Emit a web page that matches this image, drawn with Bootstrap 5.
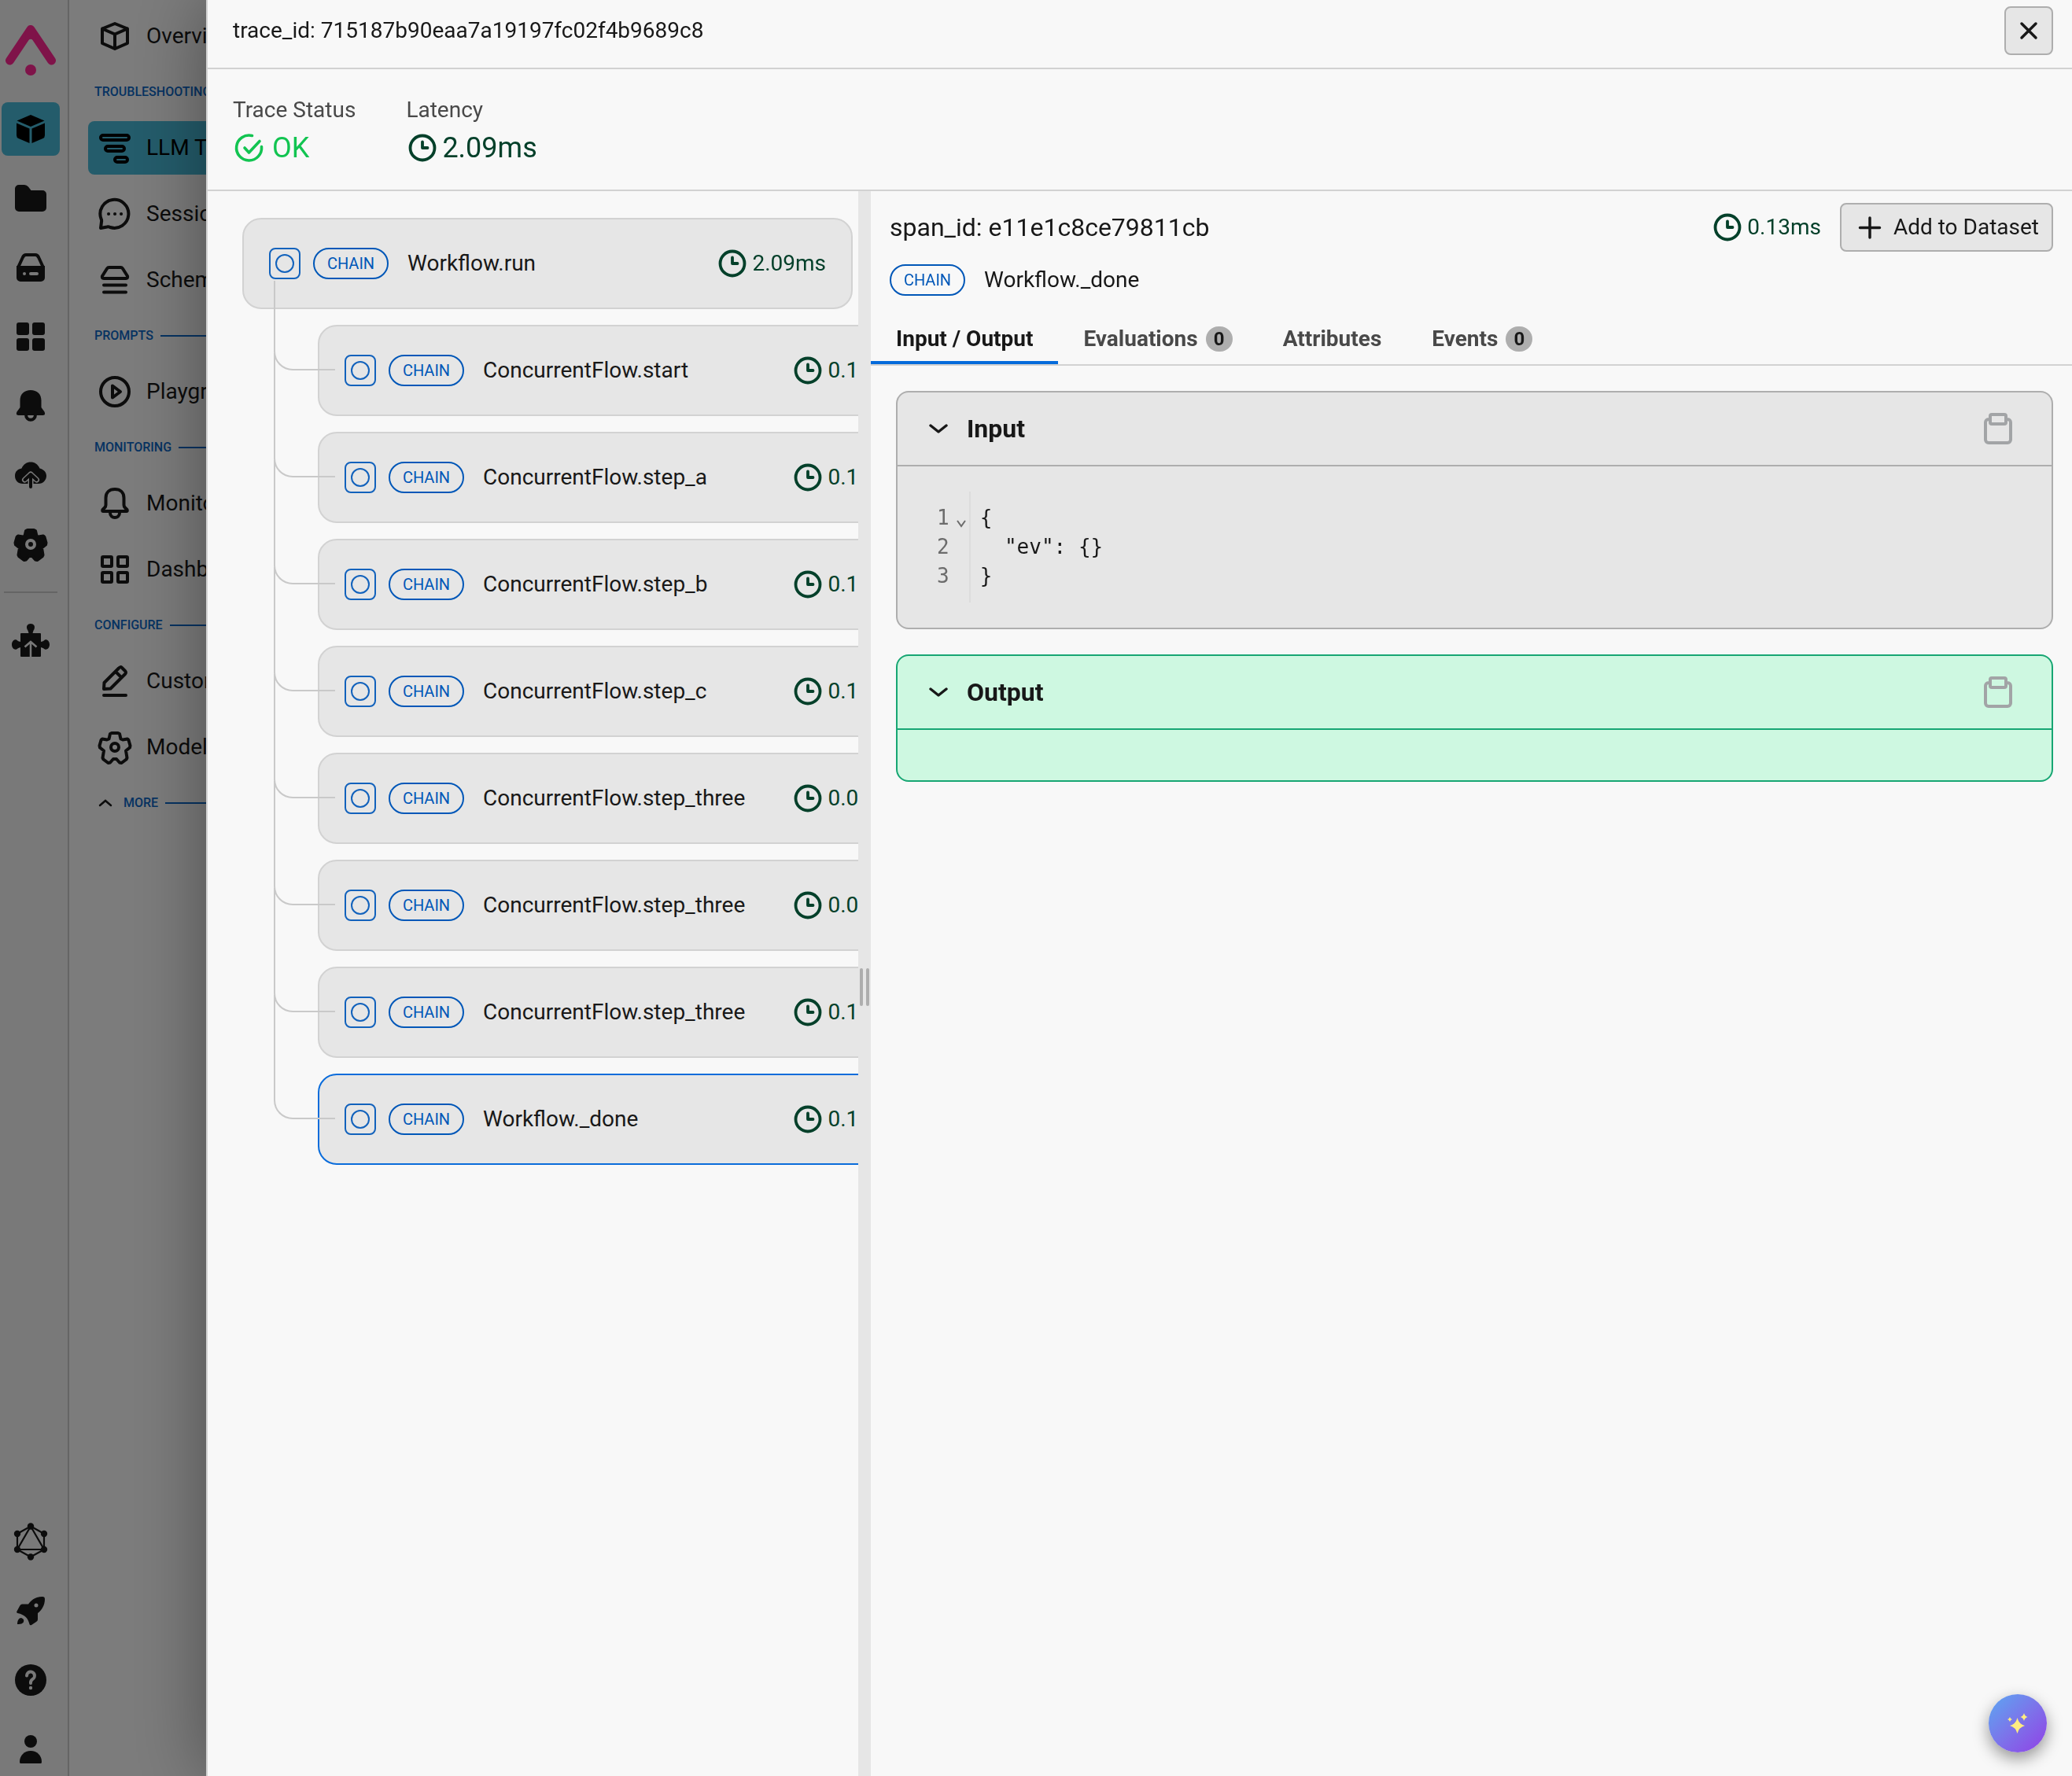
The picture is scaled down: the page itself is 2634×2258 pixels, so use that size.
<!DOCTYPE html>
<html lang="en">
<head>
<meta charset="utf-8">
<meta name="viewport" content="width=device-width, initial-scale=1">
<title>Trace details</title>
<link href="https://cdn.jsdelivr.net/npm/bootstrap@5.3.0/dist/css/bootstrap.min.css" rel="stylesheet">
<style>
:root{--ink:#181818;--muted:#494949;--line:#d2d2d2;--panel:#f8f8f8;--tile:#e6e6e6;--edge:#aeaeae;--blue:#0057b8;--time:#04402a}
body{font-family:Roboto,"Liberation Sans",sans-serif;font-size:28px;line-height:40px;color:var(--ink);background:var(--panel);overflow:hidden}
svg{display:block;flex:none}
.ico{width:48px;height:48px;fill:currentColor}
.oico{width:48px;height:48px;fill:none;stroke:currentColor;stroke-width:4;stroke-linecap:round;stroke-linejoin:round}
.rail{flex:0 0 88px;background:#f2f2f2;border-right:2px solid #cbcbcb;padding:32px 10px 0 2px}
.rail a,.side a{color:var(--ink);text-decoration:none}
.rail-list{gap:20px}
.rail-tile{width:74px;height:68px;border-radius:8px}
.rail-tile.on,.side a.on{background:#48b8d6;color:#000}
.logo{margin:0 0 34px 5px}
.rail-rule{width:68px;height:2px;background:#cbcbcb;margin:6px 3px 8px}
.side{flex:0 0 440px;padding:12px 24px}
.side a{height:68px;padding-left:10px;gap:16px;border-radius:8px;white-space:nowrap}
.side a + a{margin-top:16px}
.side-head{height:74px;padding-left:8px;gap:9px;font-size:16px;line-height:24px;font-weight:500;color:#0c66c4}
.side-head::after{content:"";flex:1;height:2px;background:#0c66c4}
.drawer.offcanvas{--bs-offcanvas-width:calc(100% - 262px);--bs-offcanvas-border-width:2px;--bs-offcanvas-border-color:#d2d2d2;--bs-offcanvas-bg:#f8f8f8;--bs-offcanvas-color:#181818;box-shadow:0 0 88px rgba(0,0,0,.37)}
.drawer-head{height:88px;padding:8px 24px 16px 32px;border-bottom:2px solid var(--line)}
.soft-btn{background:var(--tile);border:2px solid var(--edge);border-radius:8px;color:var(--ink);height:62px;font-size:28px;line-height:40px;padding:0}
.close-btn{width:62px}
.add-btn{padding:0 16px 0 14px;gap:8px}
.stats{padding:31px 32px 26px;gap:64px;border-bottom:2px solid var(--line)}
.stat-label{line-height:42px;color:var(--muted)}
.stat-value{font-size:36px;line-height:54px}
.ok{color:#12c451;gap:8px}
.time{color:var(--time);gap:4px}
.glyph{width:42px;height:42px}
.tree-pane{flex:0 0 827px;overflow:hidden;padding:34px 7px 0 44px}
.tree{display:flex;flex-direction:column;gap:20px}
.kids{margin-left:96px;width:100%}
.kids li{position:relative}
.kids li::before{content:"";position:absolute;left:-56px;top:-100px;width:78px;height:158px;border:solid #c9c9c9;border-width:0 0 2px 2px;border-bottom-left-radius:24px;pointer-events:none}
.kids li:first-child::before{top:-56px;height:114px}
.span-card{height:116px;border:2px solid var(--line);border-radius:24px;background:var(--tile);padding:0 32px}
.span-card.picked{border-color:#0a6cdb}
.toggle{width:40px;height:40px;border:2px solid #1262bc;border-radius:8px;background:none;padding:0}
.toggle::before{content:"";width:24px;height:24px;border:2px solid #1262bc;border-radius:50%}
.kind{width:96px;height:40px;border:2px solid var(--blue);border-radius:20px;color:var(--blue);font-size:20px;line-height:36px;text-align:center;margin-left:16px}
.splitter{flex:0 0 16px;background:var(--tile);gap:4px;padding-top:8px}
.splitter i{width:4px;height:48px;border-radius:2px;background:var(--edge)}
.span-head{padding:15px 24px 26px}
.span-id{font-size:32px}
.tabs{border-bottom:2px solid var(--line)}
.tabs button{height:61px;border:0;border-bottom:4px solid transparent;background:none;color:var(--muted);font-weight:700;padding:0 32px;gap:10px}
.tabs button.active{color:var(--ink);border-color:#056bdb}
.count{min-width:34px;height:32px;border-radius:16px;background:var(--edge);color:var(--ink);font-size:24px;line-height:32px}
.io-list{padding:32px 24px 0 32px;gap:32px}
.io{border:2px solid var(--edge);border-radius:16px;background:var(--tile)}
.io-head{height:94px;border-bottom:2px solid var(--edge);padding:0 42px 0 40px}
.io-head h2{font-size:32px;line-height:40px;font-weight:700;margin:0}
.plain{border:0;background:none;padding:0;color:inherit}
.fold{gap:24px}
.copy{color:#a2a4a6}
.io-body{padding:32px}
.io.green{border-color:#17a673;background:#cef8e1}
.io.green .io-head{border-color:#17a673}
.code{font-family:"DejaVu Sans Mono",monospace;font-size:26px;line-height:37px;margin:0}
.gutter{color:#6c6c6c;border-right:2px solid #dcdcdc;padding:15px 3px 15px 18px;gap:8px}
.gutter svg{margin-top:20px}
.src{padding:15px 0 15px 12px;overflow:visible}
.fab{position:absolute;right:32px;bottom:30px;width:74px;height:74px;border:0;border-radius:50%;background:linear-gradient(135deg,#5ba8f2 0%,#7c74ea 50%,#9140e6 100%);box-shadow:0 8px 20px rgba(0,0,0,.4)}
</style>
<script src="https://cdn.jsdelivr.net/npm/bootstrap@5.3.0/dist/js/bootstrap.bundle.min.js"></script>
</head>
<body>
<svg width="0" height="0" class="position-absolute" aria-hidden="true">
  <symbol id="clock" viewBox="0 0 42 42"><circle cx="21" cy="21" r="15.500" fill="none" stroke="currentColor" stroke-width="3.800"/><path d="M21 13.500V21h6.500" fill="none" stroke="currentColor" stroke-width="3.800" stroke-linecap="round" stroke-linejoin="round"/></symbol>
  <symbol id="clip" viewBox="0 0 36 40"><path d="M8 8H6a4 4 0 0 0-4 4v22a4 4 0 0 0 4 4h24a4 4 0 0 0 4-4V12a4 4 0 0 0-4-4h-2M10 2h16a2 2 0 0 1 2 2v8a2 2 0 0 1-2 2H10a2 2 0 0 1-2-2V4a2 2 0 0 1 2-2z" fill="none" stroke="currentColor" stroke-width="4"/></symbol>
  <symbol id="chev" viewBox="0 0 24 24"><path d="M2 8l10 8 10-8" fill="none" stroke="currentColor" stroke-width="3.400" stroke-linecap="round" stroke-linejoin="round"/></symbol>
  <symbol id="gear" viewBox="0 0 48 48"><path d="M20 6h8l2 1 1.500 6.500 2.500 1 6-1 1.500 1.500 2 7-.5 2.500-5 4 .5 3 1 6-1 2-6 4.500-2.500-.5-4-4.500h-4l-4 4.500-2.500.5-6-4.500-1-2 1-6 .5-3-5-4-.5-2.500 2-7L8 13.500l6 1 2.500-1L18 7z"/></symbol>
</svg>

<div class="d-flex vh-100">
  <nav class="rail d-flex flex-column" aria-label="Products">
    <a href="#" class="logo" aria-label="Home"><svg width="64" height="64" viewBox="0 0 64 64"><path d="M5.500 45L32 5.500 58.500 45" fill="none" stroke="#ff2692" stroke-width="11" stroke-linecap="round" stroke-linejoin="round"/><path d="M26 8h12l1 14-3-2c-2-3-6-3-8 0l-3 2z" fill="#ff2692"/><circle cx="32" cy="57" r="7" fill="#ff2692"/></svg></a>
    <div class="rail-list d-flex flex-column flex-grow-1">
      <a href="#" class="rail-tile on d-flex align-items-center justify-content-center" aria-label="Tracing"><svg class="ico" viewBox="0 0 48 48"><path d="M24 6l17.500 7.500L24 21 6.500 13.500zM6 16.500l16.500 7V42L8.500 36Q6 35 6 32zM42 16.500l-16.500 7V42l14-6q2.500-1 2.500-4z"/></svg></a>
      <a href="#" class="rail-tile d-flex align-items-center justify-content-center" aria-label="Projects"><svg class="ico" viewBox="0 0 48 48"><path d="M4 12a5 5 0 0 1 5-5h7q3 0 5 2.500L24.500 14H39a5 5 0 0 1 5 5v17a5 5 0 0 1-5 5H9a5 5 0 0 1-5-5z"/></svg></a>
      <a href="#" class="rail-tile d-flex align-items-center justify-content-center" aria-label="Storage"><svg class="ico" viewBox="0 0 48 48"><path d="M8 24l6-13q1.500-3 4-3h12q2.500 0 4 3l6 13" fill="none" stroke="currentColor" stroke-width="4"/><path fill-rule="evenodd" d="M6 22h36v15a5 5 0 0 1-5 5H11a5 5 0 0 1-5-5zM16 30a2 2 0 1 0 0 4 2 2 0 0 0 0-4zm8 0a2 2 0 0 0 0 4h8a2 2 0 0 0 0-4z"/></svg></a>
      <a href="#" class="rail-tile d-flex align-items-center justify-content-center" aria-label="Dashboards"><svg class="ico" viewBox="0 0 48 48"><rect x="6" y="6" width="16" height="16" rx="3"/><rect x="26" y="6" width="16" height="16" rx="3"/><rect x="6" y="26" width="16" height="16" rx="3"/><rect x="26" y="26" width="16" height="16" rx="3"/></svg></a>
      <a href="#" class="rail-tile d-flex align-items-center justify-content-center" aria-label="Alerts"><svg class="ico" viewBox="0 0 48 48"><path d="M24 4c8 0 13.500 5 13.500 13v9l4 5.500q2 4.500-2 4.500h-31q-4 0-2-4.500l4-5.500v-9C10.500 9 16 4 24 4z"/><path d="M18 35c0 9 12 9 12 0" fill="none" stroke="currentColor" stroke-width="4"/></svg></a>
      <a href="#" class="rail-tile d-flex align-items-center justify-content-center" aria-label="Uploads"><svg class="ico" viewBox="0 0 48 48"><path d="M12.500 15.500C15 10 19 7.500 24 7.500s9 2.500 11.500 8C40 16.500 44 20 44 25s-4 10-10 10H14C8 35 4 31 4 25s4-8.500 8.500-9.500z"/><path d="M24 38V23m-7.500 7l7.500-7 7.500 7" fill="none" stroke="#f2f2f2" stroke-width="7" stroke-linecap="round" stroke-linejoin="round"/><path d="M24 39V23m-7.500 7l7.500-7 7.500 7" fill="none" stroke="currentColor" stroke-width="4" stroke-linecap="round" stroke-linejoin="round"/></svg></a>
      <a href="#" class="rail-tile d-flex align-items-center justify-content-center" aria-label="Settings"><svg class="ico" viewBox="0 0 48 48"><use href="#gear" stroke="currentColor" stroke-width="4" stroke-linejoin="round"/><circle cx="24" cy="24" r="5" fill="none" stroke="#f2f2f2" stroke-width="4"/></svg></a>
      <div>
        <div class="rail-rule"></div>
      </div>
      <a href="#" class="rail-tile d-flex align-items-center justify-content-center" aria-label="Integrations"><svg class="ico" viewBox="0 0 48 48"><path d="M12 13h9.500q-.5-3-2-5C18 4 20 1 24 1s6 3 4.500 7q-1.500 2-2 5H36q1 0 1 1v10q3-.5 5-2.500c3-1 6 2 6 6s-3 7-6 6q-2-2-5-2.500v11q0 1-1 1H12q-1 0-1-1V31q-3 .5-5 2.500c-3 1-6-2-6-6s3-7 6-6q2 2 5 2.500V14q0-1 1-1z"/><path d="M24 43V24m-7.500 6.500L24 24l7.500 6.500" fill="none" stroke="#f2f2f2" stroke-width="2.500"/></svg></a>
      <a href="#" class="rail-tile mt-auto d-flex align-items-center justify-content-center" aria-label="GraphQL"><svg class="ico" viewBox="0 0 48 48"><path d="M24 4.500l17 9.500v20l-17 9.500L7 34V14zM24 4.500L41 34H7z" fill="none" stroke="currentColor" stroke-width="2.200"/><circle cx="24" cy="4.500" r="4.200"/><circle cx="41" cy="14" r="4.200"/><circle cx="41" cy="34" r="4.200"/><circle cx="24" cy="43.500" r="4.200"/><circle cx="7" cy="34" r="4.200"/><circle cx="7" cy="14" r="4.200"/></svg></a>
      <a href="#" class="rail-tile d-flex align-items-center justify-content-center" aria-label="Launch"><svg class="ico" viewBox="0 0 48 48"><path fill-rule="evenodd" d="M39 6q3 0 3 3c0 8-4 14-9 18v8q0 2-2 3l-6 4q-2 1-2.500-1c-2-8-6-12-15-14q-2-.5-1-2.500L10 18q1-2.500 3-2.500h8C26 9 31 6 39 6zM31 14.500a2.500 2.500 0 1 0 0 5 2.500 2.500 0 0 0 0-5z"/><path d="M7 41c0-5 2-8 5-8 3 1 4 3 2.500 6q-2 2.500-7.500 2z"/></svg></a>
      <a href="#" class="rail-tile d-flex align-items-center justify-content-center" aria-label="Help"><svg class="ico" viewBox="0 0 48 48"><circle cx="24" cy="24" r="20"/><path d="M19 18.500a5 5 0 1 1 7.500 4.300Q24 24.500 24 27v1" fill="none" stroke="#f2f2f2" stroke-width="4" stroke-linecap="round"/><circle cx="24" cy="34" r="2.200" fill="#f2f2f2"/></svg></a>
      <a href="#" class="rail-tile d-flex align-items-center justify-content-center" aria-label="Account"><svg class="ico" viewBox="0 0 48 48"><circle cx="24" cy="14" r="8"/><path d="M10 40c0-8 6-14 14-14s14 6 14 14q0 2-1 2H11q-1 0-1-2z"/></svg></a>
    </div>
  </nav>

  <nav class="side d-flex flex-column" aria-label="Project">
    <a href="#" class="d-flex align-items-center"><svg class="oico" viewBox="0 0 48 48"><path d="M24 8l16 6.500V33l-16 7-16-7V14.500zM8 14.500l16 7 16-7M24 21.500V40"/></svg>Overview</a>
    <div class="side-head d-flex align-items-center">TROUBLESHOOTING</div>
    <a href="#" class="on d-flex align-items-center"><svg class="oico" viewBox="0 0 48 48"><rect x="6" y="8" width="36" height="6" rx="3"/><rect x="12" y="22" width="24" height="6" rx="3"/><rect x="24" y="36" width="16" height="6" rx="3"/></svg>LLM Tracing</a>
    <a href="#" class="d-flex align-items-center"><svg class="oico" viewBox="0 0 48 48"><path d="M6 42l1-8q.5-2-.5-4A18 18 0 1 1 18 41q-2-1-4-.5z"/><path d="M16 24h.1M24 24h.1M32 24h.1"/></svg>Sessions</a>
    <a href="#" class="d-flex align-items-center"><svg class="oico" viewBox="0 0 48 48"><path d="M16.500 8h15q1.500 0 2.500 1.500L40 19q1 3-2 3H10q-3 0-2-3l6-9.500Q15 8 16.500 8zM10 30.500h28M10 39.500h28"/></svg>Schemas</a>
    <div class="side-head d-flex align-items-center">PROMPTS</div>
    <a href="#" class="d-flex align-items-center"><svg class="oico" viewBox="0 0 48 48"><circle cx="24" cy="24" r="18"/><path d="M21 16.500v15l10-7.500z"/></svg>Playground</a>
    <div class="side-head d-flex align-items-center">MONITORING</div>
    <a href="#" class="d-flex align-items-center"><svg class="oico" viewBox="0 0 48 48"><path d="M24 6c7 0 11.500 4 11.500 11v9q0 2 1.500 3.500l2.500 2.500q1 2-1 2h-29q-2 0-1-2l2.500-2.500q1.500-1.500 1.500-3.500v-9C12.500 10 17 6 24 6zM18 36c0 8 12 8 12 0"/></svg>Monitors</a>
    <a href="#" class="d-flex align-items-center"><svg class="oico" viewBox="0 0 48 48"><rect x="8" y="8" width="12" height="12" rx="1"/><rect x="28" y="8" width="12" height="12" rx="1"/><rect x="8" y="28" width="12" height="12" rx="1"/><rect x="28" y="28" width="12" height="12" rx="1"/></svg>Dashboards</a>
    <div class="side-head d-flex align-items-center">CONFIGURE</div>
    <a href="#" class="d-flex align-items-center"><svg class="oico" viewBox="0 0 48 48"><path d="M10 34l.5-8L29 7.500Q31 5 33 7l4 4q2 2 0 4L18.500 33.500zM25 12l7 7M10 42h28"/></svg>Custom Metrics</a>
    <a href="#" class="d-flex align-items-center"><svg class="oico" viewBox="0 0 48 48"><use href="#gear"/><circle cx="24" cy="24" r="5"/></svg>Models</a>
    <div class="side-head d-flex align-items-center"><svg width="28" height="24" viewBox="0 0 28 24" fill="none" stroke="#181818" stroke-width="2.500" stroke-linecap="round"><path d="M7 15l7-6 7 6"/></svg>MORE</div>
  </nav>
</div>
<div class="offcanvas-backdrop show"></div>

<section class="drawer offcanvas offcanvas-end show" data-bs-backdrop="false" tabindex="-1" aria-label="Trace details">
  <header class="drawer-head d-flex align-items-center justify-content-between">
    <span>trace_id: 715187b90eaa7a19197fc02f4b9689c8</span>
    <button type="button" class="soft-btn close-btn d-flex align-items-center justify-content-center" aria-label="Close"><svg width="24" height="24" viewBox="0 0 24 24"><path d="M3 3l18 18M21 3L3 21" stroke="currentColor" stroke-width="3.500" stroke-linecap="round"/></svg></button>
  </header>
  <div class="stats d-flex">
    <div>
      <div class="stat-label">Trace Status</div>
      <div class="stat-value ok d-flex align-items-center"><svg class="glyph" viewBox="0 0 42 42" fill="none" stroke="currentColor" stroke-width="3.600" stroke-linecap="round" stroke-linejoin="round"><path d="M24.500 5.500A16 16 0 1 0 36.500 19.500M15 21l5.500 6L34 12.500"/></svg>OK</div>
    </div>
    <div>
      <div class="stat-label">Latency</div>
      <div class="stat-value time d-flex align-items-center"><svg class="glyph"><use href="#clock"/></svg>2.09ms</div>
    </div>
  </div>

  <div class="d-flex flex-grow-1 overflow-hidden">
    <div class="tree-pane">
      <ul class="tree list-unstyled mb-0">
        <li><div class="span-card d-flex align-items-center"><button type="button" class="toggle d-flex align-items-center justify-content-center" aria-label="Toggle span"></button><span class="kind">CHAIN</span><span class="ms-4">Workflow.run</span><span class="time ms-auto d-flex align-items-center"><svg class="glyph"><use href="#clock"/></svg>2.09ms</span></div></li>
        <li>
          <ul class="tree kids list-unstyled">
            <li><div class="span-card d-flex align-items-center"><button type="button" class="toggle d-flex align-items-center justify-content-center" aria-label="Toggle span"></button><span class="kind">CHAIN</span><span class="ms-4">ConcurrentFlow.start</span><span class="time ms-auto d-flex align-items-center"><svg class="glyph"><use href="#clock"/></svg>0.13ms</span></div></li>
            <li><div class="span-card d-flex align-items-center"><button type="button" class="toggle d-flex align-items-center justify-content-center" aria-label="Toggle span"></button><span class="kind">CHAIN</span><span class="ms-4">ConcurrentFlow.step_a</span><span class="time ms-auto d-flex align-items-center"><svg class="glyph"><use href="#clock"/></svg>0.13ms</span></div></li>
            <li><div class="span-card d-flex align-items-center"><button type="button" class="toggle d-flex align-items-center justify-content-center" aria-label="Toggle span"></button><span class="kind">CHAIN</span><span class="ms-4">ConcurrentFlow.step_b</span><span class="time ms-auto d-flex align-items-center"><svg class="glyph"><use href="#clock"/></svg>0.13ms</span></div></li>
            <li><div class="span-card d-flex align-items-center"><button type="button" class="toggle d-flex align-items-center justify-content-center" aria-label="Toggle span"></button><span class="kind">CHAIN</span><span class="ms-4">ConcurrentFlow.step_c</span><span class="time ms-auto d-flex align-items-center"><svg class="glyph"><use href="#clock"/></svg>0.13ms</span></div></li>
            <li><div class="span-card d-flex align-items-center"><button type="button" class="toggle d-flex align-items-center justify-content-center" aria-label="Toggle span"></button><span class="kind">CHAIN</span><span class="ms-4">ConcurrentFlow.step_three</span><span class="time ms-auto d-flex align-items-center"><svg class="glyph"><use href="#clock"/></svg>0.09ms</span></div></li>
            <li><div class="span-card d-flex align-items-center"><button type="button" class="toggle d-flex align-items-center justify-content-center" aria-label="Toggle span"></button><span class="kind">CHAIN</span><span class="ms-4">ConcurrentFlow.step_three</span><span class="time ms-auto d-flex align-items-center"><svg class="glyph"><use href="#clock"/></svg>0.09ms</span></div></li>
            <li><div class="span-card d-flex align-items-center"><button type="button" class="toggle d-flex align-items-center justify-content-center" aria-label="Toggle span"></button><span class="kind">CHAIN</span><span class="ms-4">ConcurrentFlow.step_three</span><span class="time ms-auto d-flex align-items-center"><svg class="glyph"><use href="#clock"/></svg>0.13ms</span></div></li>
            <li><div class="span-card picked d-flex align-items-center"><button type="button" class="toggle d-flex align-items-center justify-content-center" aria-label="Toggle span"></button><span class="kind">CHAIN</span><span class="ms-4">Workflow._done</span><span class="time ms-auto d-flex align-items-center"><svg class="glyph"><use href="#clock"/></svg>0.13ms</span></div></li>
          </ul>
        </li>
      </ul>
    </div>
    <div class="splitter d-flex align-items-center justify-content-center" role="separator" aria-orientation="vertical"><i></i><i></i></div>
    <div class="flex-grow-1">
      <div class="span-head">
        <div class="d-flex align-items-center mb-3">
          <span class="span-id">span_id: e11e1c8ce79811cb</span>
          <span class="time ms-auto me-4 d-flex align-items-center"><svg class="glyph"><use href="#clock"/></svg>0.13ms</span>
          <button type="button" class="soft-btn add-btn d-flex align-items-center"><svg width="44" height="44" viewBox="0 0 44 44"><path d="M22 10v25M9.500 22.500h25" stroke="currentColor" stroke-width="3.500" stroke-linecap="round"/></svg>Add to Dataset</button>
        </div>
        <div class="d-flex align-items-center"><span class="kind ms-0">CHAIN</span><span class="ms-4">Workflow._done</span></div>
      </div>
      <div class="tabs d-flex" role="tablist">
        <button type="button" role="tab" aria-selected="true" class="active d-flex align-items-center">Input / Output</button>
        <button type="button" role="tab" aria-selected="false" class="d-flex align-items-center">Evaluations<span class="count">0</span></button>
        <button type="button" role="tab" aria-selected="false" class="d-flex align-items-center">Attributes</button>
        <button type="button" role="tab" aria-selected="false" class="d-flex align-items-center">Events<span class="count">0</span></button>
      </div>
      <div class="io-list d-flex flex-column">
        <section class="io">
          <div class="io-head d-flex align-items-center justify-content-between">
            <button type="button" class="plain fold d-flex align-items-center" aria-expanded="true"><svg width="24" height="24"><use href="#chev"/></svg><h2>Input</h2></button>
            <button type="button" class="plain copy me-2" aria-label="Copy input"><svg width="36" height="40"><use href="#clip"/></svg></button>
          </div>
          <div class="io-body d-flex">
            <div class="code gutter d-flex"><div>1<br>2<br>3</div><svg width="14" height="12" viewBox="0 0 14 12"><path d="M2 2l5 7 5-7" fill="none" stroke="currentColor" stroke-width="2"/></svg></div>
            <pre class="code src">{
  "ev": {}
}</pre>
          </div>
        </section>
        <section class="io green">
          <div class="io-head d-flex align-items-center justify-content-between">
            <button type="button" class="plain fold d-flex align-items-center" aria-expanded="true"><svg width="24" height="24"><use href="#chev"/></svg><h2>Output</h2></button>
            <button type="button" class="plain copy me-2" aria-label="Copy output"><svg width="36" height="40"><use href="#clip"/></svg></button>
          </div>
          <div class="io-body"></div>
        </section>
      </div>
    </div>
  </div>
  <button type="button" class="fab d-flex align-items-center justify-content-center" aria-label="Assistant"><svg width="28" height="28" viewBox="0 0 28 28" fill="#ffec80"><path d="M13.500 7q2 8 9.500 10-7.500 2-9.500 10Q11.500 19 4 17q7.500-2 9.500-10zM22 1q1 4 4.500 5-3.500 1-4.500 5-1-4-4.500-5 3.500-1 4.500-5zM4 6q.7 2.500 3 3-2.300.5-3 3-.7-2.500-3-3 2.300-.5 3-3z"/></svg></button>
</section>
</body>
</html>
